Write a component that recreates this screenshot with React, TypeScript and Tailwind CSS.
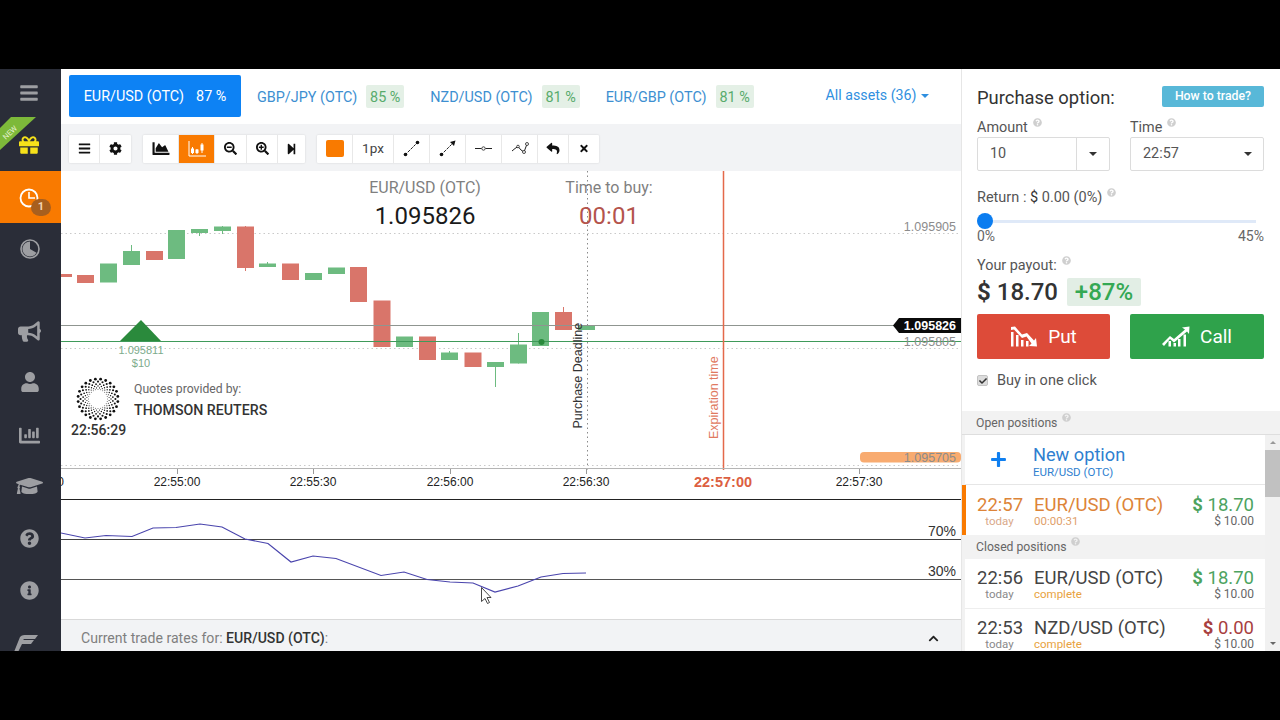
import React from "react";
import { FaBars, FaGift, FaBullhorn, FaUser, FaChartBar, FaGraduationCap, FaQuestionCircle, FaInfoCircle, FaCog, FaSearchMinus, FaSearchPlus, FaStepForward, FaReply, FaTimes, FaChevronUp, FaPlus, FaCheck, FaChartArea } from "react-icons/fa";

const G = "#6dbb80";
const R = "#d9756a";
const candles: [number, number, number, string, number?, number?][] = [
  [55, 274, 277, R], [77, 275, 283, R], [100, 263.5, 282.5, G], [123, 251, 265, G, 245], [146, 251, 260, R],
  [168, 230, 259, G], [191, 229, 233, G, 229, 236], [214, 226.5, 231, G, 226, 234], [237, 226.5, 268, R, 226, 271],
  [259, 263.5, 267, G, 262], [282, 263.5, 280, R], [305, 273, 280, G], [328, 267.5, 274, G], [350, 267, 302, R],
  [373.5, 300.5, 347, R], [396, 336.5, 347, G], [419, 336.5, 360, R], [441, 352.5, 360, G, 351], [464.5, 352.5, 367, R],
  [487, 362, 367, G, 362, 387], [510, 344.5, 363.5, G, 333], [532, 312, 346, G], [555, 312, 330, R, 307], [578, 325, 330, G],
];
const rsi = "61,533 85,538 106,535.5 132,536.5 153,528 176,527.5 200,524 222,527 245,539 268,543.5 291,562 313,556 336,558.5 381,575.5 404,572 427,579.5 450,582 473,583 495,592 518,586 541,577 563,573.5 586,573";

function Q() {
  return <FaQuestionCircle className="inline-block w-[9px] h-[9px] text-[#cfcfcf] ml-[5px] align-top mt-[-1px]" />;
}

function SideItem({ children, className = "" }: { children: React.ReactNode; className?: string }) {
  return <div className={`h-[52px] shrink-0 flex items-center justify-center pr-[2px] text-[#9d9ea2] ${className}`}>{children}</div>;
}

function Sidebar() {
  return (
    <div className="w-[61px] shrink-0 bg-[#2a2d38] flex flex-col overflow-hidden">
      <div className="h-[48px] shrink-0 flex items-center justify-center pr-[3px]">
        <FaBars className="w-[20px] h-[20px] text-[#9d9ea2]" />
      </div>
      <div className="h-[54px] shrink-0 relative flex items-center justify-center">
        <svg className="absolute left-0 top-0" width="40" height="36" viewBox="0 0 40 36">
          <polygon points="11,0 36,0 0,33 0,11" fill="#7db93a" />
        </svg>
        <span className="absolute left-[2px] top-[12px] -rotate-[43deg] text-[7.500px] text-[#e6f2cf] leading-none">NEW</span>
        <FaGift className="absolute left-[19px] top-[18px] w-[20px] h-[20px] text-[#f6e11a]" />
      </div>
      <SideItem className="bg-[#f97a00] relative">
        <svg width="20" height="20" viewBox="0 0 20 20" className="mt-[1px] mr-[1px]">
          <circle cx="10" cy="10" r="8.500" fill="none" stroke="#fff" strokeWidth="1.800" />
          <path d="M10 4v6h6" fill="none" stroke="#fff" strokeWidth="1.600" />
        </svg>
        <span className="absolute left-[31px] top-[28px] w-[20px] h-[17px] rounded-full bg-[#a85f1e] text-[#f3d5b5] text-[11px] font-bold flex items-center justify-center">1</span>
      </SideItem>
      <SideItem>
        <svg width="20" height="20" viewBox="0 0 20 20">
          <circle cx="10" cy="10" r="9" fill="none" stroke="#9d9ea2" strokeWidth="1.600" />
          <path d="M10 2.500A7.500 7.500 0 1 0 16.500 13.700L10 10Z" fill="#9d9ea2" />
        </svg>
      </SideItem>
      <div className="h-[30px] shrink-0" />
      <SideItem><FaBullhorn className="w-[23px] h-[23px]" /></SideItem>
      <SideItem><FaUser className="w-[18px] h-[20px] mt-[-2px]" /></SideItem>
      <SideItem><FaChartBar className="w-[25px] h-[21px]" /></SideItem>
      <SideItem className="mt-[-1px]"><FaGraduationCap className="w-[27px] h-[22px]" /></SideItem>
      <SideItem><FaQuestionCircle className="w-[19px] h-[19px]" /></SideItem>
      <SideItem><FaInfoCircle className="w-[19px] h-[19px]" /></SideItem>
      <SideItem>
        <svg width="24" height="20" viewBox="0 0 24 20" className="mt-[3px] mr-[8px]">
          <path d="M6 3C8 1 10 1 12 1H24L21 5H11C10 5 9.500 5.500 9 6H20L17 10H8L4 18H0Z" fill="#9d9ea2" />
        </svg>
      </SideItem>
    </div>
  );
}

function Tab({ name, pct, className = "" }: { name: string; pct: string; className?: string }) {
  return (
    <div className={`flex items-center gap-[9px] ${className}`}>
      <span className="text-[14.400px] text-[#3d8fd1] whitespace-nowrap pt-[2px]">{name}</span>
      <span className="h-[23px] w-[38px] rounded-[2px] bg-[#e4f0e6] text-[#58ab6c] text-[14.400px] pt-[2px] flex items-center justify-center whitespace-nowrap">{pct}</span>
    </div>
  );
}

function TabBar() {
  return (
    <div className="h-[55px] shrink-0 bg-white flex items-center pl-[8px]">
      <div className="w-[172px] h-[42px] rounded-[2px] bg-[#0d82f4] text-white text-[14.400px] pt-[2px] flex items-center justify-center gap-[12px] mt-[-1px]">
        <span>EUR/USD (OTC)</span><span>87 %</span>
      </div>
      <Tab name="GBP/JPY (OTC)" pct="85 %" className="ml-[16px]" />
      <Tab name="NZD/USD (OTC)" pct="81 %" className="ml-[26px]" />
      <Tab name="EUR/GBP (OTC)" pct="81 %" className="ml-[26px]" />
      <div className="ml-[72px] flex items-center gap-[5px] text-[14.200px] text-[#2f8fe0] mt-[-1px]">
        <span>All assets (36)</span>
        <span className="w-0 h-0 border-x-[4px] border-x-transparent border-t-[4px] border-t-[#2f8fe0]" />
      </div>
    </div>
  );
}

function Btn({ w, children, orange, last }: { w: string; children: React.ReactNode; orange?: boolean; last?: boolean }) {
  return (
    <div className={`${w} h-full flex items-center justify-center ${last ? "" : "border-r border-[#e8e8e8]"} ${orange ? "bg-[#f97a00] text-white" : "text-[#111]"}`}>
      {children}
    </div>
  );
}

function ToolGroup({ children, className = "" }: { children: React.ReactNode; className?: string }) {
  return <div className={`h-[28px] bg-white flex shadow-[0_0_2px_rgba(0,0,0,0.15)] rounded-[1px] ${className}`}>{children}</div>;
}

function Toolbar() {
  return (
    <div className="h-[47px] shrink-0 bg-[#f2f3f5] flex items-center pl-[8px] pt-[2px] gap-[12px]">
      <ToolGroup>
        <Btn w="w-[31px]"><FaBars className="w-[13px] h-[13px]" /></Btn>
        <Btn w="w-[31px]" last><FaCog className="w-[13px] h-[13px]" /></Btn>
      </ToolGroup>
      <ToolGroup>
        <Btn w="w-[36px]"><FaChartArea className="w-[18px] h-[17px]" /></Btn>
        <Btn w="w-[36px]" orange>
          <svg width="18" height="17" viewBox="0 0 18 17" stroke="#fff" fill="#fff">
            <path d="M1 1v15h17" fill="none" strokeWidth="1" />
            <path d="M4.500 7v7M9 9v5M14 3v10" strokeWidth="1" />
            <rect x="3.500" y="9" width="2" height="3.500" />
            <rect x="8" y="10" width="2" height="2.500" />
            <rect x="13" y="5" width="2" height="5" />
          </svg>
        </Btn>
        <Btn w="w-[32px]"><FaSearchMinus className="w-[13px] h-[13px]" /></Btn>
        <Btn w="w-[31px]"><FaSearchPlus className="w-[13px] h-[13px]" /></Btn>
        <Btn w="w-[27px]" last><FaStepForward className="w-[11px] h-[12px]" /></Btn>
      </ToolGroup>
      <ToolGroup>
        <Btn w="w-[36px]"><span className="w-[18px] h-[17px] rounded-[2px] bg-[#f97a00]" /></Btn>
        <Btn w="w-[41px]"><span className="text-[13.500px] text-[#444]">1px</span></Btn>
        <Btn w="w-[36px]">
          <svg width="17" height="17" viewBox="0 0 17 17"><path d="M2 15L15 2" stroke="#222" strokeWidth="1" strokeDasharray="3 1" /><circle cx="2.500" cy="14.500" r="1.800" fill="#111" /><circle cx="14.500" cy="2.500" r="1.800" fill="#111" /></svg>
        </Btn>
        <Btn w="w-[36px]">
          <svg width="17" height="17" viewBox="0 0 17 17"><path d="M2 15L15 2" stroke="#222" strokeWidth="1" strokeDasharray="3 1" /><circle cx="2.500" cy="14.500" r="1.800" fill="#111" /><path d="M16.500 0.500l-1.500 5.500-4-4z" fill="#111" /></svg>
        </Btn>
        <Btn w="w-[36px]">
          <svg width="17" height="5" viewBox="0 0 17 5"><path d="M0 2.500H6.500M10.500 2.500H17" stroke="#222" strokeWidth="1" /><circle cx="8.500" cy="2.500" r="1.700" fill="none" stroke="#222" strokeWidth="0.800" /></svg>
        </Btn>
        <Btn w="w-[36px]">
          <svg width="18" height="13" viewBox="0 0 18 13"><path d="M1 9L4 6.500L7 4.500L10 8L13 10L16 2" fill="none" stroke="#222" strokeWidth="1" /><circle cx="16" cy="2" r="1.500" fill="#fff" stroke="#222" strokeWidth="0.800" /><circle cx="13" cy="10" r="1.500" fill="#fff" stroke="#222" strokeWidth="0.800" /><circle cx="7" cy="4.500" r="1.300" fill="#fff" stroke="#222" strokeWidth="0.800" /></svg>
        </Btn>
        <Btn w="w-[31px]"><FaReply className="w-[14px] h-[13px]" /></Btn>
        <Btn w="w-[30px]" last><FaTimes className="w-[10px] h-[11px]" /></Btn>
      </ToolGroup>
    </div>
  );
}

function Logo() {
  const rings: [number, number][] = [[9.5, 0.45], [11.2, 0.55], [13, 0.7], [15, 0.85], [17.4, 1.05], [20, 1.4]];
  const dots: React.ReactNode[] = [];
  rings.forEach(([r, s], i) => {
    for (let k = 0; k < 24; k++) {
      const a = ((k + (i % 2) * 0.5) / 24) * Math.PI * 2;
      dots.push(<circle key={`${i}-${k}`} cx={22 + r * Math.cos(a)} cy={22 + r * Math.sin(a)} r={s} fill="#111" />);
    }
  });
  return <svg width="44" height="44" viewBox="0 0 44 44">{dots}</svg>;
}

function ChartSvg() {
  const sans = "Liberation Sans, sans-serif";
  const times: [number, string][] = [[177, "22:55:00"], [313, "22:55:30"], [450, "22:56:00"], [586, "22:56:30"], [859, "22:57:30"]];
  return (
    <svg className="absolute inset-0" width="900" height="448" viewBox="61 171 900 448">
      <g stroke="#c9c9c9" strokeWidth="1" strokeDasharray="1.500 3">
        <path d="M61 233.500H961M61 348.500H961M61 465.500H961" />
      </g>
      <path d="M587.500 171V470" stroke="#8a8a8a" strokeDasharray="1.500 3" />
      {candles.map(([x, a, b, c, wt, wb], i) => {
        const cx = x + 8.5;
        return (
          <g key={i}>
            {(wt !== undefined || wb !== undefined) && (
              <path d={`M${cx} ${wt ?? a}V${wb ?? b}`} stroke={c} strokeWidth="1" />
            )}
            <rect x={x} y={a} width={17} height={b - a} fill={c} />
          </g>
        );
      })}
      <path d="M61 325.500H961" stroke="#8f9590" />
      <path d="M61 341.500H961" stroke="#3f9a5a" />
      <polygon points="120,341 141,320 161,341" fill="#2a8a3c" />
      <circle cx="541.500" cy="342" r="3" fill="#2a8a3c" />
      <path d="M723.500 171V470" stroke="#e4694a" strokeWidth="1.500" />
      <path d="M61 468.500H961" stroke="#b5b5b5" />
      {times.map(([x]) => <path key={x} d={`M${x + 0.5} 469V474`} stroke="#999" />)}
      <rect x="860" y="452" width="101" height="10.500" rx="4" fill="#f8ab70" />

      <g fontFamily={sans} fontSize="12.500" fill="#8c8c8c" textAnchor="end">
        <text x="956" y="230.500">1.095905</text>
        <text x="956" y="345.500">1.095805</text>
        <text x="956" y="461.500">1.095705</text>
      </g>
      <polygon points="893,325.500 899,318 961,318 961,333 899,333" fill="#0b0b0b" />
      <text x="956" y="329.500" fontFamily={sans} fontSize="12.500" fontWeight="700" fill="#fff" textAnchor="end">1.095826</text>

      <g fontFamily={sans} fontSize="11" fill="#7dab8c" textAnchor="middle">
        <text x="141" y="354">1.095811</text>
        <text x="141" y="366.500">$10</text>
      </g>

      <g fontFamily={sans} fontSize="12" fill="#222" textAnchor="middle">
        <text x="64" y="485.500" textAnchor="end">0</text>
        {times.map(([x, t]) => <text key={x} x={x} y="485.500">{t}</text>)}
      </g>
      <text x="723" y="486.500" fontFamily={sans} fontSize="14.500" fontWeight="700" fill="#dc5f42" textAnchor="middle">22:57:00</text>

      <text transform="translate(581.500 428.500) rotate(-90)" fontFamily={sans} fontSize="12.500" fill="#333">Purchase Deadline</text>
      <text transform="translate(717.500 439) rotate(-90)" fontFamily={sans} fontSize="12.500" fill="#e0795f">Expiration time</text>

      <path d="M61 499.500H961" stroke="#222" strokeWidth="1.200" />
      <path d="M61 539.500H961" stroke="#444" />
      <path d="M61 579.500H961" stroke="#555" />
      <polyline points={rsi} fill="none" stroke="#4a45ad" strokeWidth="1.200" />
      <g fontFamily={sans} fontSize="14" fill="#333" textAnchor="end">
        <text x="956" y="536">70%</text>
        <text x="956" y="576">30%</text>
      </g>
      <path d="M481.500 587.500V601.500L485 598.500L487.500 603.500L489.500 602.500L487 597.500H491Z" fill="#fff" stroke="#333" strokeWidth="0.900" />
    </svg>
  );
}

function Chart() {
  return (
    <div className="relative flex-1 bg-white overflow-hidden">
      <ChartSvg />
      <div className="absolute left-[294px] top-[8px] w-[140px] text-center">
        <div className="text-[16px] text-[#7f7f7f] leading-[18px] whitespace-nowrap">EUR/USD (OTC)</div>
        <div className="text-[24px] text-[#1a1a1a] leading-[26px] mt-[6px]">1.095826</div>
      </div>
      <div className="absolute left-[493px] top-[8px] text-center w-[110px]">
        <div className="text-[16px] text-[#7f7f7f] leading-[18px] whitespace-nowrap">Time to buy:</div>
        <div className="text-[24px] text-[#b4544c] leading-[26px] mt-[6px]">00:01</div>
      </div>
      <div className="absolute left-[15px] top-[206px]"><Logo /></div>
      <div className="absolute left-[10px] top-[251px] text-[14px] font-medium text-[#333] leading-[16px]">22:56:29</div>
      <div className="absolute left-[73px] top-[211px] text-[12.200px] text-[#666] leading-[14px]">Quotes provided by:</div>
      <div className="absolute left-[73px] top-[231px] text-[14.200px] font-medium text-[#333] leading-[16px] whitespace-nowrap">THOMSON REUTERS</div>
    </div>
  );
}

function Center() {
  return (
    <div className="w-[900px] shrink-0 flex flex-col">
      <TabBar />
      <Toolbar />
      <Chart />
      <div className="h-[32px] shrink-0 bg-[#f2f3f5] border-t border-[#d9d9d9] flex items-center justify-between pl-[20px] pr-[21px] pt-[6px]">
        <span className="text-[14.100px] text-[#7f7f7f]">Current trade rates for: <span className="font-medium text-[#333]">EUR/USD (OTC)</span>:</span>
        <FaChevronUp className="w-[13px] h-[11px] text-[#222]" />
      </div>
    </div>
  );
}

function Caret({ className = "" }: { className?: string }) {
  return <span className={`w-0 h-0 border-x-[4px] border-x-transparent border-t-[4px] border-t-[#333] ${className}`} />;
}

function PutIcon() {
  return (
    <svg width="28" height="21" viewBox="0 0 28 21" fill="#fff">
      <path d="M1 1L5 0.500L12 8.500L17 7L24 14.500L26 12L27 20.500L19 20L21.500 17.500L16.500 10.500L12 12L4 3.500L1 4Z" />
      <rect x="1" y="6" width="2.500" height="14.500" />
      <rect x="6" y="9" width="2.500" height="11.500" />
      <rect x="11" y="14" width="2.500" height="6.500" />
      <rect x="16" y="15" width="2.500" height="5.500" />
    </svg>
  );
}

function CallIcon() {
  return (
    <svg width="28" height="21" viewBox="0 0 28 21" fill="#fff">
      <path d="M0 18L8 10L12 13L23 3.500L20 1.500L27.500 0.500L27 8L25 5.500L12 16.500L8 13L2 20Z" />
      <rect x="6.500" y="15" width="2.500" height="5.500" />
      <rect x="11.500" y="17" width="2.500" height="3.500" />
      <rect x="16" y="13" width="2.500" height="7.500" />
      <rect x="21.500" y="8.500" width="2.500" height="12" />
    </svg>
  );
}

function Row({ time, name, sub, subCls, amt, amtCls, timeCls = "text-[#444]", todayCls = "text-[#8a8a8a]", nameCls = "text-[#444]", h = "h-[49px]" }: { time: string; name: string; sub: string; subCls: string; amt: string; amtCls: string; timeCls?: string; todayCls?: string; nameCls?: string; h?: string }) {
  return (
    <div className={`${h} shrink-0 bg-white flex items-center pl-[12px] pr-[11px] pt-[2px]`}>
      <div className="w-[45px] text-center">
        <div className={`text-[18.500px] leading-[20px] ${timeCls}`}>{time}</div>
        <div className={`text-[11.500px] leading-[13px] ${todayCls}`}>today</div>
      </div>
      <div className="flex-1 ml-[12px]">
        <div className={`text-[18.500px] leading-[20px] whitespace-nowrap ${nameCls}`}>{name}</div>
        <div className={`text-[11.500px] leading-[13px] ${subCls}`}>{sub}</div>
      </div>
      <div className="text-right">
        <div className={`text-[18.500px] leading-[20px] whitespace-nowrap ${amtCls}`}><span className="font-bold">$</span> {amt}</div>
        <div className="text-[12px] leading-[13px] text-[#666] whitespace-nowrap">$ 10.00</div>
      </div>
    </div>
  );
}

function Right() {
  return (
    <div className="flex-1 flex flex-col bg-white border-l border-[#e6e6e6] overflow-hidden">
      <div className="h-[342px] shrink-0 pl-[15px] pr-[16px] flex flex-col">
        <div className="flex items-center justify-between h-[21px] mt-[17px]">
          <span className="text-[18.400px] text-[#333] mt-[2px]">Purchase option:</span>
          <span className="w-[102px] h-[21px] rounded-[2px] bg-[#58b8d8] text-white text-[12.300px] font-medium flex items-center justify-center">How to trade?</span>
        </div>
        <div className="flex gap-[20px] mt-[12px] text-[14.400px] text-[#555] leading-[18px]">
          <div className="w-[133px]">Amount<Q /></div>
          <div className="flex-1">Time<Q /></div>
        </div>
        <div className="flex gap-[20px]">
          <div className="w-[133px] h-[34px] border border-[#dcdcdc] rounded-[2px] flex items-center">
            <span className="flex-1 pl-[12px] text-[14.400px] text-[#555]">10</span>
            <div className="w-[33px] h-full border-l border-[#dcdcdc] flex items-center justify-center"><Caret /></div>
          </div>
          <div className="flex-1 h-[34px] border border-[#dcdcdc] rounded-[2px] flex items-center justify-between pl-[12px] pr-[11px]">
            <span className="text-[14.400px] text-[#555]">22:57</span><Caret />
          </div>
        </div>
        <div className="text-[14.500px] text-[#555] leading-[18px] mt-[18px] whitespace-nowrap">Return : <span className="text-[#333]">$</span> 0.00 (0%)<Q /></div>
        <div className="relative h-[16px] mt-[6px] flex items-center">
          <div className="h-[3px] w-[279px] bg-[#dfe9f8]" />
          <div className="absolute left-0 top-0 w-[16px] h-[16px] rounded-full bg-[#0b7df0]" />
        </div>
        <div className="flex justify-between text-[14px] text-[#666] leading-[16px] mt-[-1px]"><span>0%</span><span>45%</span></div>
        <div className="text-[14.400px] text-[#555] leading-[18px] mt-[13px]">Your payout:<Q /></div>
        <div className="flex items-center mt-[3px] h-[28px]">
          <span className="text-[24px] font-medium text-[#333] whitespace-nowrap"><span className="font-bold">$</span> 18.70</span>
          <span className="ml-[9px] w-[74px] h-[28px] rounded-[2px] bg-[#e2eee5] text-[#34a853] text-[24px] font-medium flex items-center justify-center">+87%</span>
        </div>
        <div className="flex gap-[20px] mt-[8px]">
          <div className="w-[133px] h-[45px] rounded-[2px] bg-[#dd4b39] text-white flex items-center justify-center gap-[10px]">
            <PutIcon /><span className="text-[19px] pt-[2px]">Put</span>
          </div>
          <div className="flex-1 h-[45px] rounded-[2px] bg-[#2fa24b] text-white flex items-center justify-center gap-[10px]">
            <CallIcon /><span className="text-[19px] pt-[2px]">Call</span>
          </div>
        </div>
        <div className="flex items-center mt-[11px] text-[14.500px] text-[#555]">
          <span className="w-[11px] h-[11px] rounded-[2px] bg-[#dcdcdc] border border-[#c4c4c4] flex items-center justify-center"><FaCheck className="w-[8px] h-[8px] text-[#333]" /></span>
          <span className="ml-[9px]">Buy in one click</span>
        </div>
      </div>
      <div className="h-[24px] shrink-0 bg-[#f2f2f2] border-b border-[#dedede] pl-[14px] pt-[2px] flex items-center text-[12.200px] text-[#666]">
        <span>Open positions<Q /></span>
      </div>
      <div className="flex-1 flex min-h-0">
        <div className="flex-1 bg-[#f2f2f2] flex flex-col overflow-hidden pl-[3px]">
          <div className="h-[50px] shrink-0 bg-white flex items-center border-b border-[#e6e6e6]">
            <FaPlus className="w-[17px] h-[17px] text-[#0f7ff0] ml-[25px]" />
            <div className="ml-[26px] pt-[3px]">
              <div className="text-[18.200px] leading-[22px] text-[#2f7fd0]">New option</div>
              <div className="text-[11.500px] leading-[13px] text-[#2f7fd0]">EUR/USD (OTC)</div>
            </div>
          </div>
          <div className="relative shrink-0">
            <div className="absolute left-[-3px] top-0 w-[4px] h-[50px] bg-[#f97a00]" />
            <Row h="h-[50px]" time="22:57" name="EUR/USD (OTC)" sub="00:00:31" subCls="text-[#dfa06a]" amt="18.70" amtCls="text-[#4da35f]" timeCls="text-[#dd8438]" todayCls="text-[#d9a98a]" nameCls="text-[#dd8438]" />
          </div>
          <div className="h-[24px] shrink-0 pl-[11px] flex items-center text-[12.200px] text-[#666]"><span>Closed positions<Q /></span></div>
          <Row time="22:56" name="EUR/USD (OTC)" sub="complete" subCls="text-[#e8a23d]" amt="18.70" amtCls="text-[#4da35f]" />
          <div className="h-px shrink-0 bg-[#eeeeee]" />
          <Row time="22:53" name="NZD/USD (OTC)" sub="complete" subCls="text-[#e8a23d]" amt="0.00" amtCls="text-[#a8403f]" />
        </div>
        <div className="w-[15px] shrink-0 bg-[#f1f1f1] flex flex-col items-center">
          <span className="mt-[6px] w-0 h-0 border-x-[3px] border-x-transparent border-b-[3px] border-b-[#999]" />
          <div className="w-full h-[47px] bg-[#c1c1c1] mt-[6px]" />
          <span className="mt-auto mb-[6px] w-0 h-0 border-x-[3px] border-x-transparent border-t-[3px] border-t-[#666]" />
        </div>
      </div>
    </div>
  );
}

export default function App() {
  return (
    <div className="w-[1280px] h-[720px] bg-black overflow-hidden pt-[69px] [font-family:Roboto,sans-serif]">
      <div className="h-[582px] flex overflow-hidden">
        <Sidebar />
        <Center />
        <Right />
      </div>
    </div>
  );
}
